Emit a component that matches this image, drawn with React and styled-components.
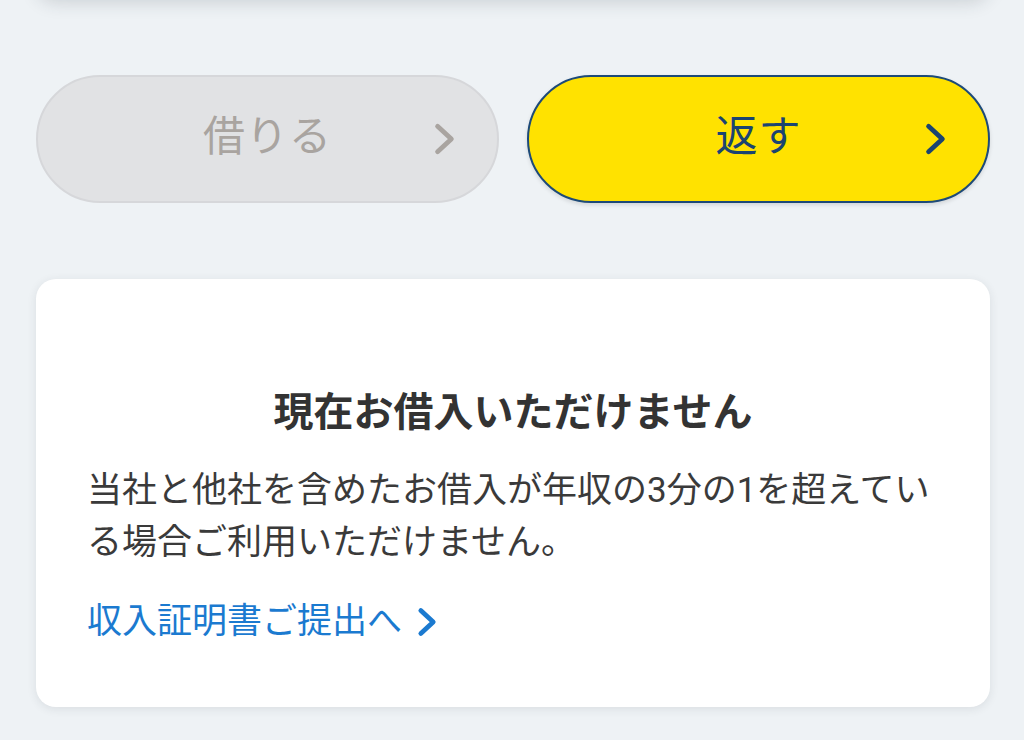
import React from "react"
import styled, { createGlobalStyle } from "styled-components"

const GlobalStyle = createGlobalStyle`
  html, body {
    margin: 0;
    padding: 0;
    background: #eef2f5;
    font-family: Roboto, "Noto Sans CJK JP", sans-serif;
  }
`

const Page = styled.div`
  width: 1024px;
  height: 740px;
  overflow: hidden;
  padding: 0 34px 0 36px;
  box-sizing: border-box;
`

const TopCard = styled.div`
  height: 40px;
  margin-top: -42px;
  background: #fff;
  border-radius: 20px;
  box-shadow: 0 4px 18px rgba(40, 50, 60, 0.18);
`

const ButtonRow = styled.div`
  display: grid;
  grid-template-columns: 1fr 1fr;
  gap: 28px;
  margin-top: 77px;
`

const PillButton = styled.button`
  position: relative;
  height: 128px;
  border-radius: 64px;
  box-sizing: border-box;
  display: flex;
  align-items: center;
  justify-content: center;
  padding: 0 0 4px;
  font-family: inherit;
  font-size: 42px;
  line-height: 1;
  letter-spacing: 1px;
  cursor: ${(p) => (p.$disabled ? "default" : "pointer")};
  background: ${(p) => (p.$disabled ? "#e1e2e4" : "#ffe200")};
  color: ${(p) => (p.$disabled ? "#a9a4a0" : "#1b4471")};
  border: ${(p) => (p.$disabled ? "2px solid #d6d7da" : "2px solid #1d4a78")};
  box-shadow: ${(p) => (p.$disabled ? "none" : "0 2px 4px rgba(0,0,0,0.12)")};
`

const ButtonChevron = styled.svg`
  position: absolute;
  right: 40px;
  top: 50%;
  transform: translateY(-50%);
`

const Card = styled.div`
  margin-top: 76px;
  background: #fff;
  border-radius: 20px;
  padding: 106px 51px 59px;
  box-shadow: 0 2px 10px rgba(40, 50, 60, 0.1);
`

const Title = styled.h2`
  margin: 0;
  text-align: center;
  font-size: 40px;
  line-height: 56px;
  font-weight: 700;
  color: #333;
`

const Body = styled.p`
  margin: 24px 0 0;
  font-size: 35px;
  line-height: 52px;
  color: #3a3a3a;
`

const Link = styled.a`
  display: inline-flex;
  align-items: center;
  gap: 15px;
  margin-top: 27px;
  font-size: 35px;
  line-height: 52px;
  color: #1b7ad0;
  text-decoration: none;
`

const Chevron = ({ color, width = 22, height = 32, stroke = 5 }) => (
  <svg width={width} height={height} viewBox="0 0 22 32">
    <polyline
      points="4,4 17,16 4,28"
      fill="none"
      stroke={color}
      strokeWidth={stroke}
      strokeLinecap="round"
      strokeLinejoin="round"
    />
  </svg>
)

const ActionButton = ({ label, disabled }) => (
  <PillButton $disabled={disabled}>
    {label}
    <ButtonChevron width="24" height="34" viewBox="0 0 22 32">
      <polyline
        points="4,4 17,16 4,28"
        fill="none"
        stroke={disabled ? "#a9a4a0" : "#1b4471"}
        strokeWidth="4.5"
        strokeLinecap="round"
        strokeLinejoin="round"
      />
    </ButtonChevron>
  </PillButton>
)

export default function App() {
  return (
    <>
      <GlobalStyle />
      <Page>
        <TopCard />
        <ButtonRow>
          <ActionButton label="借りる" disabled />
          <ActionButton label="返す" />
        </ButtonRow>
        <Card>
          <Title>現在お借入いただけません</Title>
          <Body>
            当社と他社を含めたお借入が年収の3分の1を超えている場合ご利用いただけません。
          </Body>
          <Link href="#">
            収入証明書ご提出へ
            <Chevron color="#1b7ad0" width={21} height={32} stroke={5} />
          </Link>
        </Card>
      </Page>
    </>
  )
}
